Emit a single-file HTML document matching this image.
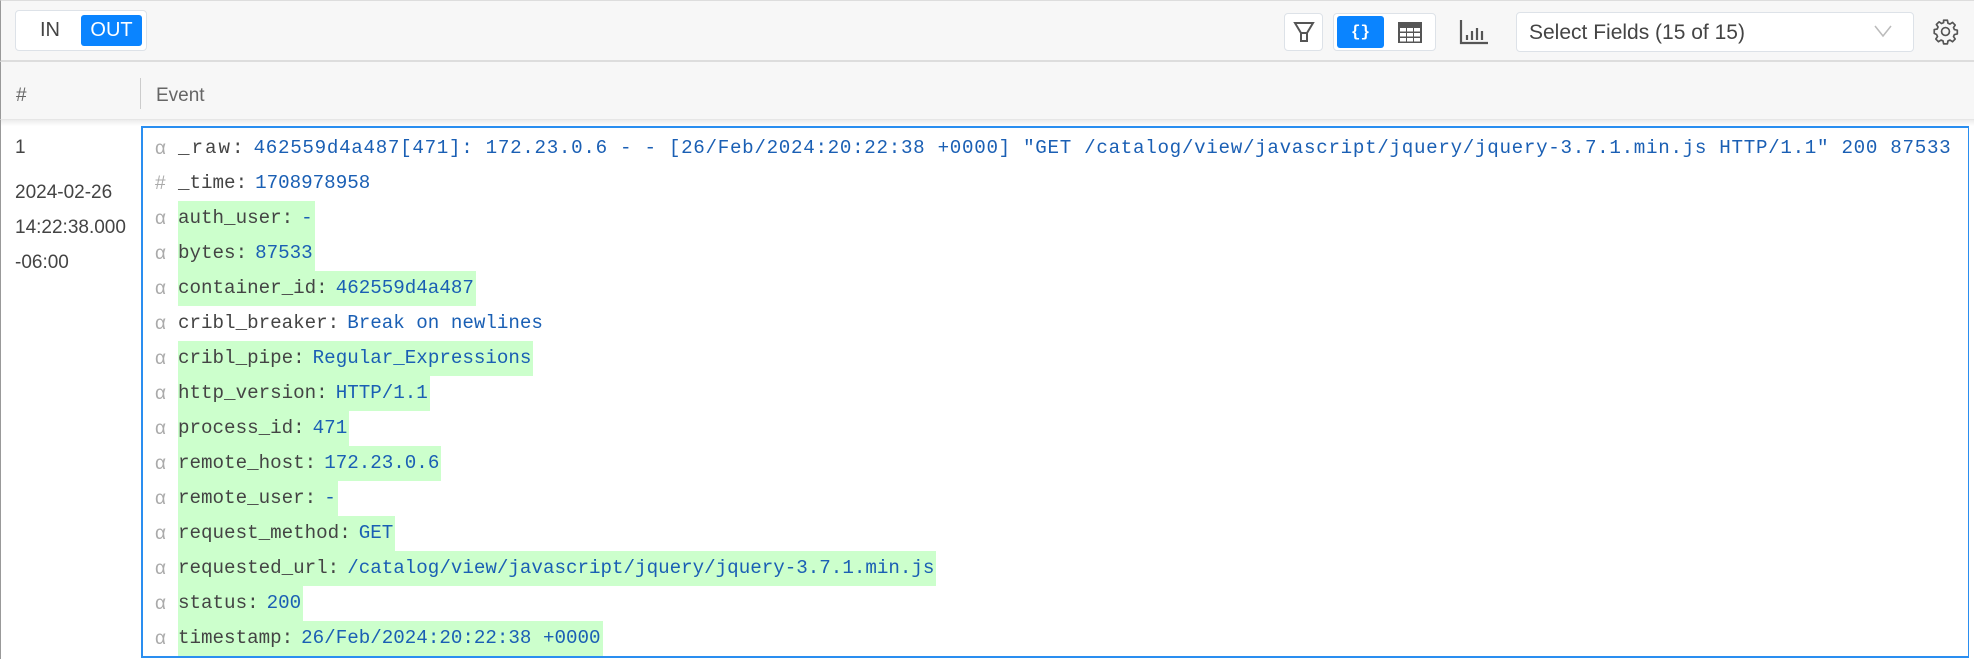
<!DOCTYPE html>
<html><head><meta charset="utf-8"><style>
*{box-sizing:border-box;margin:0;padding:0}
body{width:1974px;height:659px;background:#fff;font-family:"Liberation Sans",sans-serif;position:relative;overflow:hidden;color:#333}
.tb{position:absolute;left:0;top:0;width:1974px;height:62px;background:#f7f7f7;border-top:1px solid #ddd;border-bottom:2px solid #ddd;border-left:1px solid #999}
.abs{position:absolute}
.seg{border:1px solid #dde2e8;border-radius:4px;background:#fff}
.hdr{position:absolute;left:0;top:62px;width:1974px;height:58px;background:#f7f7f7;border-left:1px solid #999;border-bottom:1px solid #e6e6e6}
.cell{position:absolute;left:141px;top:126px;width:1828px;height:532px;border:2px solid #2a8ef0;border-right:1px solid #2a8ef0}
.line{position:absolute;left:0;height:35px;line-height:35px;font-family:"Liberation Mono",monospace;font-size:19.2px;white-space:nowrap}
.t{position:absolute;left:12px;color:#aaa;font-family:"Liberation Sans",sans-serif;font-size:19px}
.kv{position:absolute;left:35px;padding-right:2px}
.kv.g{background:#ccffcc}
.k{color:#444}.v{color:#1a5fb4;margin-left:8px}
.left{position:absolute;left:15px;font-size:19px;color:#444}
</style></head><body>
<div class="tb"></div>
<div class="abs seg" style="left:15px;top:10px;width:132px;height:41px"></div>
<div class="abs" style="left:40px;top:19px;font-size:20px;color:#444">IN</div>
<div class="abs" style="left:81px;top:15px;width:61px;height:31px;background:#0a84ff;border-radius:3px;color:#fff;font-size:20px;text-align:center;line-height:31px">OUT</div>

<div class="abs seg" style="left:1284px;top:13px;width:39px;height:38px"></div>
<svg class="abs" style="left:1290px;top:18px" width="28" height="28" viewBox="0 0 28 28"><path d="M5 5h18l-6 10v8h-6v-8z" fill="none" stroke="#555" stroke-width="2"/><path d="M11 15h6" stroke="#555" stroke-width="2"/></svg>
<div class="abs seg" style="left:1333px;top:13px;width:103px;height:38px"></div>
<div class="abs" style="left:1337px;top:16px;width:47px;height:32px;background:#0a84ff;border-radius:3px;color:#fff;font-family:'Liberation Mono',monospace;font-size:16px;font-weight:bold;text-align:center;line-height:32px">{}</div>
<svg class="abs" style="left:1398px;top:22px" width="24" height="21" viewBox="0 0 24 21"><rect x="0" y="0" width="24" height="21" fill="#555"/><g fill="#fff"><rect x="2" y="6" width="6" height="3.5"/><rect x="9" y="6" width="6" height="3.5"/><rect x="16" y="6" width="6" height="3.5"/><rect x="2" y="11" width="6" height="3.5"/><rect x="9" y="11" width="6" height="3.5"/><rect x="16" y="11" width="6" height="3.5"/><rect x="2" y="16" width="6" height="3.5"/><rect x="9" y="16" width="6" height="3.5"/><rect x="16" y="16" width="6" height="3.5"/></g></svg>
<svg class="abs" style="left:1459px;top:19px" width="30" height="26" viewBox="0 0 30 26"><path d="M2 1v23h27" fill="none" stroke="#555" stroke-width="2.2"/><path d="M8 16v5M13 12v9M18 9v12M23 12v9" stroke="#555" stroke-width="2.2"/></svg>
<div class="abs seg" style="left:1516px;top:12px;width:398px;height:40px"></div>
<div class="abs" style="left:1529px;top:21px;font-size:21px;color:#444">Select Fields (15 of 15)</div>
<svg class="abs" style="left:1874px;top:24px" width="18" height="14" viewBox="0 0 18 14"><path d="M1 2l8 10 8-10" fill="none" stroke="#bbb" stroke-width="1.5"/></svg>
<svg class="abs" style="left:1932px;top:18px" width="27" height="27" viewBox="0 0 24 24"><path d="M10.3 2h3.4l.5 2.6 1.8.8 2.2-1.5 2.4 2.4-1.5 2.2.8 1.8 2.6.5v3.4l-2.6.5-.8 1.8 1.5 2.2-2.4 2.4-2.2-1.5-1.8.8-.5 2.6h-3.4l-.5-2.6-1.8-.8-2.2 1.5-2.4-2.4 1.5-2.2-.8-1.8L2 13.7v-3.4l2.6-.5.8-1.8-1.5-2.2 2.4-2.4 2.2 1.5 1.8-.8z" fill="none" stroke="#555" stroke-width="1.5" stroke-linejoin="round"/><circle cx="12" cy="12" r="3.5" fill="none" stroke="#555" stroke-width="1.5"/></svg>

<div class="hdr"></div>
<div class="abs" style="left:16px;top:85px;font-size:19px;color:#666">#</div>
<div class="abs" style="left:140px;top:78px;width:1px;height:31px;background:#ccc"></div>
<div class="abs" style="left:156px;top:85px;font-size:19px;color:#666">Event</div>
<div class="abs" style="left:0;top:120px;width:1974px;height:6px;background:linear-gradient(#ececec,#fff)"></div>
<div class="abs" style="left:0;top:120px;width:1px;height:539px;background:#999"></div>

<div class="left" style="top:137px">1</div>
<div class="left" style="top:182px">2024-02-26</div>
<div class="left" style="top:217px">14:22:38.000</div>
<div class="left" style="top:252px">-06:00</div>

<div class="cell">
<div class="line" style="top:3px"><span class="t">α</span><span class="kv"><span class="k" style="letter-spacing:2px">_raw:</span><span class="v" style="letter-spacing:0.7px">462559d4a487[471]: 172.23.0.6 - - [26/Feb/2024:20:22:38 +0000] "GET /catalog/view/javascript/jquery/jquery-3.7.1.min.js HTTP/1.1" 200 87533</span></span></div>
<div class="line" style="top:38px"><span class="t">#</span><span class="kv"><span class="k">_time:</span><span class="v">1708978958</span></span></div>
<div class="line" style="top:73px"><span class="t">α</span><span class="kv g"><span class="k">auth_user:</span><span class="v">-</span></span></div>
<div class="line" style="top:108px"><span class="t">α</span><span class="kv g"><span class="k">bytes:</span><span class="v">87533</span></span></div>
<div class="line" style="top:143px"><span class="t">α</span><span class="kv g"><span class="k">container_id:</span><span class="v">462559d4a487</span></span></div>
<div class="line" style="top:178px"><span class="t">α</span><span class="kv"><span class="k">cribl_breaker:</span><span class="v">Break on newlines</span></span></div>
<div class="line" style="top:213px"><span class="t">α</span><span class="kv g"><span class="k">cribl_pipe:</span><span class="v">Regular_Expressions</span></span></div>
<div class="line" style="top:248px"><span class="t">α</span><span class="kv g"><span class="k">http_version:</span><span class="v">HTTP/1.1</span></span></div>
<div class="line" style="top:283px"><span class="t">α</span><span class="kv g"><span class="k">process_id:</span><span class="v">471</span></span></div>
<div class="line" style="top:318px"><span class="t">α</span><span class="kv g"><span class="k">remote_host:</span><span class="v">172.23.0.6</span></span></div>
<div class="line" style="top:353px"><span class="t">α</span><span class="kv g"><span class="k">remote_user:</span><span class="v">-</span></span></div>
<div class="line" style="top:388px"><span class="t">α</span><span class="kv g"><span class="k">request_method:</span><span class="v">GET</span></span></div>
<div class="line" style="top:423px"><span class="t">α</span><span class="kv g"><span class="k">requested_url:</span><span class="v">/catalog/view/javascript/jquery/jquery-3.7.1.min.js</span></span></div>
<div class="line" style="top:458px"><span class="t">α</span><span class="kv g"><span class="k">status:</span><span class="v">200</span></span></div>
<div class="line" style="top:493px"><span class="t">α</span><span class="kv g"><span class="k">timestamp:</span><span class="v">26/Feb/2024:20:22:38 +0000</span></span></div>
</div>
</body></html>
